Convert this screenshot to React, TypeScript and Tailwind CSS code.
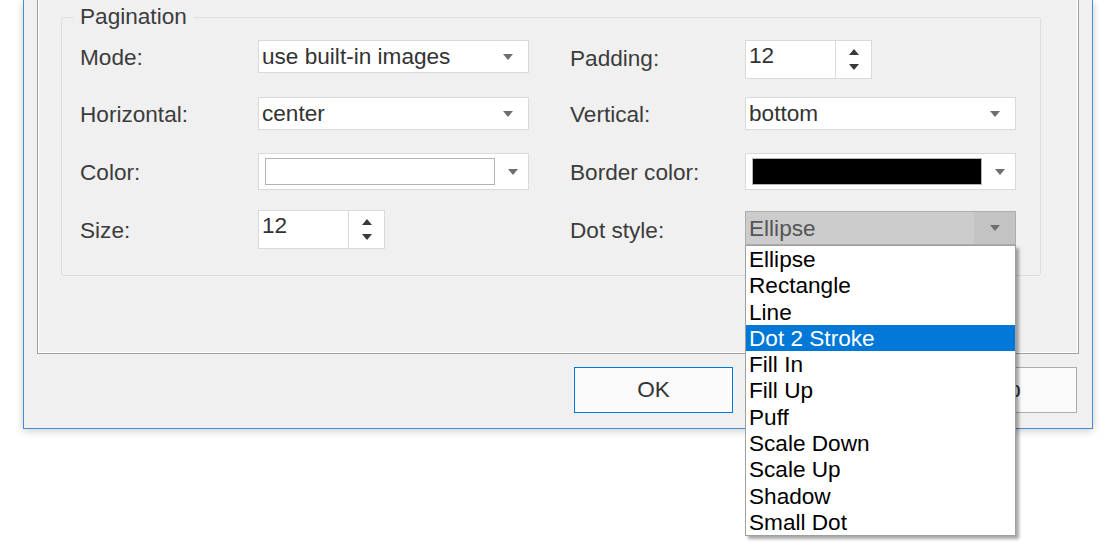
import React from "react";

const dotStyles = [
  "Ellipse",
  "Rectangle",
  "Line",
  "Dot 2 Stroke",
  "Fill In",
  "Fill Up",
  "Puff",
  "Scale Down",
  "Scale Up",
  "Shadow",
  "Small Dot",
];

function Arrow({ up = false }: { up?: boolean }) {
  return (
    <svg width="10" height="6" viewBox="0 0 10 6" className="shrink-0">
      {up ? <path d="M0 6 L5 0 L10 6 Z" fill="#3a3a3a" /> : <path d="M0 0 L10 0 L5 6 Z" fill="#6e6e6e" />}
    </svg>
  );
}

function Label({ text, h }: { text: string; h: string }) {
  return <div className={`flex items-center pt-[2px] text-[#3c3c3c] ${h}`}>{text}</div>;
}

function Combo({ value }: { value: string }) {
  return (
    <div className="h-[33px] border border-[#d9d9d9] bg-white flex items-center justify-between pl-[3px] pr-[15px] text-[#333]">
      <span className="pt-[1px]">{value}</span>
      <Arrow />
    </div>
  );
}

function ColorCombo({ swatch }: { swatch: string }) {
  return (
    <div className="h-[37px] border border-[#d9d9d9] bg-white flex items-center pl-[6px] pr-[10px] gap-[13px]">
      <div className={`flex-1 h-[27px] border border-[#b4b4b4] ${swatch}`} />
      <Arrow />
    </div>
  );
}

function Spin({ value }: { value: string }) {
  return (
    <div className="flex h-[39px] w-[127px]">
      <div className="w-[91px] border border-[#d9d9d9] bg-white pl-[3px] pt-[2px] text-[#333]">{value}</div>
      <div className="w-[36px] border border-[#d9d9d9] border-l-0 bg-white flex flex-col items-center justify-center gap-[9px]">
        <Arrow up />
        <svg width="10" height="6" viewBox="0 0 10 6">
          <path d="M0 0 L10 0 L5 6 Z" fill="#3a3a3a" />
        </svg>
      </div>
    </div>
  );
}

function DotStyle() {
  return (
    <div className="relative mt-[1px]">
      <div className="h-[34px] border border-[#adadad] bg-[#cccccc] flex items-stretch text-[#555]">
        <div className="flex-1 flex items-center pl-[3px] pt-[2px]">Ellipse</div>
        <div className="w-[41px] bg-[#c3c3c3] flex items-center justify-center">
          <Arrow />
        </div>
      </div>
      <div className="absolute left-0 top-full z-10 w-full border border-[#a0a0a0] bg-white text-black shadow-[3px_3px_3px_rgba(0,0,0,0.35)]">
        {dotStyles.map((s) => (
          <div
            key={s}
            className={
              s === "Dot 2 Stroke"
                ? "h-[26.3px] leading-[26px] pt-[1px] pl-[3px] bg-[#0078d7] text-white"
                : "h-[26.3px] leading-[26px] pt-[1px] pl-[3px]"
            }
          >
            {s}
          </div>
        ))}
      </div>
    </div>
  );
}

export default function App() {
  return (
    <div className="w-[1107px] h-[550px] bg-white overflow-hidden font-['Liberation_Sans',Arial,sans-serif] text-[22.6px] leading-[26px]">
      <div className="ml-[23px] w-[1070px] border-x border-b border-[#4a89d8] bg-[#f0f0f0] pb-[15px] shadow-[0_2px_8px_rgba(0,0,0,0.2)]">
        <div className="mx-[13px] border-x border-b border-[#a0a0a0] shadow-[inset_1px_0_0_#ffffff,inset_-1px_-1px_0_#ffffff] pt-[4px] pb-[77px]">
          <fieldset className="ml-[23px] mr-[37px] border border-[#dcdcdc] rounded-[3px] pl-[18px] pb-[25px]">
            <legend className="-ml-[7px] px-[7px] text-[#3c3c3c]">Pagination</legend>
            <div className="mt-[10px] grid grid-cols-[178px_271px_41px_175px_271px] grid-rows-[57px_56px_57px_40px] items-start">
              <Label text="Mode:" h="h-[33px]" />
              <Combo value="use built-in images" />
              <div />
              <Label text="Padding:" h="h-[35px]" />
              <Spin value="12" />

              <Label text="Horizontal:" h="h-[33px]" />
              <Combo value="center" />
              <div />
              <Label text="Vertical:" h="h-[33px]" />
              <Combo value="bottom" />

              <Label text="Color:" h="h-[37px]" />
              <ColorCombo swatch="bg-white" />
              <div />
              <Label text="Border color:" h="h-[37px]" />
              <ColorCombo swatch="bg-black" />

              <Label text="Size:" h="h-[40px]" />
              <Spin value="12" />
              <div />
              <Label text="Dot style:" h="h-[40px]" />
              <DotStyle />
            </div>
          </fieldset>
        </div>
        <div className="mt-[13px] pr-[15px] flex justify-end gap-[13px]">
          <button className="w-[159px] h-[46px] border border-[#0078d7] bg-[#fbfbfb] text-[#333]">OK</button>
          <button className="w-[159px] h-[46px] border border-[#adadad] bg-[#fbfbfb] text-[#333]">Cancel</button>
          <button className="w-[159px] h-[46px] border border-[#adadad] bg-[#fbfbfb] text-[#333]">Help</button>
        </div>
      </div>
    </div>
  );
}
